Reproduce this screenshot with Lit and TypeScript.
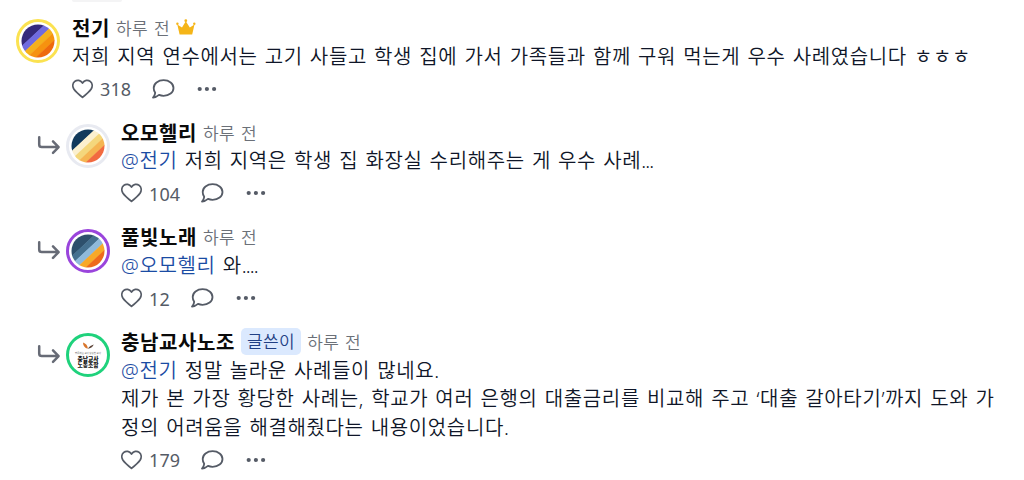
import {LitElement, html, css, svg} from 'lit';
import {customElement, property} from 'lit/decorators.js';

interface Comment {
    name: string;
    avatar: string;
    likes: number;
    mention?: string;
    lines: string[];
    trail?: string;
    crown?: boolean;
    author?: boolean;
    reply?: boolean;
}

const comments: Comment[] = [
    {
        name: '전기', avatar: 'sunset', likes: 318, crown: true,
        lines: ['저희 지역 연수에서는 고기 사들고 학생 집에 가서 가족들과 함께 구워 먹는게 우수 사례였습니다 ㅎㅎㅎ'],
    },
    {
        name: '오모헬리', avatar: 'sand', likes: 104, mention: '@전기', reply: true,
        lines: ['저희 지역은 학생 집 화장실 수리해주는 게 우수 사례'], trail: '...',
    },
    {
        name: '풀빛노래', avatar: 'ocean', likes: 12, mention: '@오모헬리', reply: true,
        lines: ['와'], trail: '....',
    },
    {
        name: '충남교사노조', avatar: 'union', likes: 179, mention: '@전기', reply: true, author: true,
        lines: [
            '정말 놀라운 사례들이 많네요.',
            '제가 본 가장 황당한 사례는, 학교가 여러 은행의 대출금리를 비교해 주고 ‘대출 갈아타기’까지 도와 가',
            '정의 어려움을 해결해줬다는 내용이었습니다.',
        ],
    },
];

// ring colour, then the diagonal bands from top left to bottom right
const palettes: Record<string, {ring: string; bands: string[]}> = {
    sunset: {ring: '#fbe251', bands: ['#35297c', '#706be0', '#f5b01c', '#f6920f', '#ee6a0c']},
    sand: {ring: '#e8eaf1', bands: ['#123a5c', '#fbf0cf', '#f4d77c', '#f5b552', '#f26a40']},
    ocean: {ring: '#9a45dc', bands: ['#2d506c', '#44708f', '#8fbadb', '#f7a928', '#ee6a1c']},
    union: {ring: '#1fd27c', bands: []},
};

@customElement('user-avatar')
export class UserAvatar extends LitElement {

    @property() kind = 'sunset';

    static styles = css`
      :host {
        display: block;
        width: 44px;
        height: 44px;
      }

      svg {
        display: block;
      }

      .motto {
        font: 2.4px "Noto Sans CJK KR", sans-serif;
        fill: #666;
      }

      .logo {
        font: 900 5.8px/1 "Noto Sans CJK KR", sans-serif;
        fill: #111;
      }
    `

    renderBands(bands: string[]) {
        const edges = [-24, -7.5, -1.5, 4.5, 10.5, 24];
        return svg`
            <clipPath id="disc"><circle cx="22" cy="22" r="16.5"/></clipPath>
            <g clip-path="url(#disc)">
                <g transform="translate(22 22) rotate(47)">
                    ${bands.map((fill, i) => svg`
                        <rect x=${edges[i]} y="-24" width=${edges[i + 1] - edges[i] + 0.4} height="48" fill=${fill}/>
                    `)}
                </g>
            </g>
        `;
    }

    renderUnion() {
        return svg`
            <path d="M17 9.500c2.800 1 5 3.200 4.800 6.300c-3-.8-4.900-3-4.800-6.300z" fill="#d9752b"/>
            <path d="M21.800 15.800c1.500-2.200 3.400-3.400 6-4.200c-1.200 2.600-3.200 4-6 4.200z" fill="#5c4438"/>
            <text class="motto" x="9" y="20.800" textLength="26" lengthAdjust="spacingAndGlyphs">행동하는 교사 당당한 교사</text>
            <text class="logo" x="11.500" y="28" textLength="21" lengthAdjust="spacingAndGlyphs">충남교사</text>
            <text class="logo" x="11.500" y="34.200" textLength="21" lengthAdjust="spacingAndGlyphs">노동조합</text>
        `;
    }

    render() {
        const {ring, bands} = palettes[this.kind];
        return html`
            <svg width="44" height="44" viewBox="0 0 44 44">
                <circle cx="22" cy="22" r="20.5" fill="#fff" stroke=${ring} stroke-width="3"/>
                ${bands.length ? this.renderBands(bands) : this.renderUnion()}
            </svg>
        `
    }
}

@customElement('comment-item')
export class CommentItem extends LitElement {

    @property({attribute: false}) comment!: Comment;

    static styles = css`
      :host {
        display: block;
      }

      .comment {
        display: flex;
        padding-left: 16px;
      }

      .comment.reply {
        padding-left: 37px;
      }

      .arrow {
        flex: none;
        width: 29px;
        padding-top: 17px;
      }

      svg {
        display: block;
        flex: none;
      }

      user-avatar {
        flex: none;
        margin: 6px 12px 0 0;
      }

      .reply user-avatar {
        margin-right: 11px;
      }

      .body {
        flex: 1;
        white-space: nowrap;
      }

      .head {
        display: flex;
        align-items: center;
        height: 28.6px;
      }

      .name {
        font-size: 20px;
        font-weight: 700;
        letter-spacing: 0.6px;
        color: #0a0a0a;
      }

      .badge {
        height: 27px;
        line-height: 27px;
        margin-left: 6px;
        padding: 0 6px;
        border-radius: 5px;
        background: #dbe9fe;
        color: #1f3f84;
        font-size: 17px;
        font-weight: 350;
        letter-spacing: 0.4px;
      }

      .time {
        margin-left: 6px;
        font-size: 17px;
        font-weight: 350;
        letter-spacing: 0.4px;
        word-spacing: 1px;
        color: #6b7078;
      }

      .crown {
        margin-left: 6px;
      }

      .line {
        height: 28.4px;
        line-height: 29.4px;
        font-size: 20px;
        font-weight: 350;
        letter-spacing: 0.63px;
        word-spacing: 1.3px;
        color: #0f1628;
      }

      .trail {
        letter-spacing: -0.9px;
      }

      .mention {
        color: #1a4ba3;
      }

      .actions {
        display: flex;
        align-items: center;
        height: 37.2px;
        color: #555b66;
      }

      .likes {
        margin: 1px 21px 0 6px;
        font-size: 18px;
        line-height: 24px;
        letter-spacing: 0.1px;
      }

      .dots {
        margin-left: 22px;
      }
    `

    render() {
        const c = this.comment;
        return html`
            <div class="comment ${c.reply ? 'reply' : ''}">
                ${c.reply ? html`
                    <div class="arrow">
                        <svg width="24" height="22" viewBox="0 0 24 22" fill="none" stroke="#676b76" stroke-width="2.500" stroke-linecap="round" stroke-linejoin="round">
                            <path d="M2.200 2.200v7.300q0 2.600 2.600 2.600h16.600M16 6.300l5.600 5.800-5.600 5.800"/>
                        </svg>
                    </div>
                ` : ''}
                <user-avatar kind=${c.avatar}></user-avatar>
                <div class="body">
                    <div class="head">
                        <span class="name">${c.name}</span>
                        ${c.author ? html`<span class="badge">글쓴이</span>` : ''}
                        <span class="time">하루 전</span>
                        ${c.crown ? html`
                            <svg class="crown" width="20" height="16" viewBox="0 0 20 16" fill="#f5b518">
                                <path d="M3.600 15.400L1.300 5.400l4.700 3.200L9.800 2.200l4 6.400 4.700-3.200-2.300 10z"/>
                                <circle cx="1.400" cy="4.700" r="1.200"/>
                                <circle cx="9.800" cy="1.700" r="1.400"/>
                                <circle cx="18.300" cy="4.700" r="1.200"/>
                            </svg>
                        ` : ''}
                    </div>
                    ${c.lines.map((line, i) => html`
                        <div class="line">${i === 0 && c.mention ? html`<span class="mention">${c.mention}</span> ` : ''}${line}${c.trail ? html`<span class="trail">${c.trail}</span>` : ''}</div>
                    `)}
                    <div class="actions">
                        <svg width="22" height="20" viewBox="0 0 22 20" fill="none" stroke="currentColor" stroke-width="1.800" stroke-linejoin="round">
                            <path d="M10.500 18.400C7 15.500 3.800 12.700 2 10.200C.2 7.500.6 4.200 2.800 2.400C5.200.5 8.400 1.100 10.500 4C12.600 1.100 15.800.5 18.200 2.400C20.400 4.200 20.800 7.500 19 10.200C17.200 12.700 14 15.500 10.500 18.400z"/>
                        </svg>
                        <span class="likes">${c.likes}</span>
                        <svg width="23" height="20" viewBox="0 0 23 20" fill="none" stroke="currentColor" stroke-width="1.800" stroke-linejoin="round">
                            <path d="M11.600 1.200c5.600 0 9.900 3.400 9.900 7.800s-4.300 7.800-9.900 7.800c-1.700 0-3.200-.3-4.600-.9c-1.500 1.300-3.500 2.500-6 2.700c1.200-1.300 2-3 2.200-4.800C2.200 12.400 1.700 10.700 1.700 9C1.700 4.600 6 1.200 11.600 1.200z"/>
                        </svg>
                        <svg class="dots" width="20" height="6" viewBox="0 0 20 6" fill="currentColor">
                            <circle cx="2.700" cy="3" r="2.100"/>
                            <circle cx="9.900" cy="3" r="2.100"/>
                            <circle cx="17.100" cy="3" r="2.100"/>
                        </svg>
                    </div>
                </div>
            </div>
        `
    }
}

@customElement('app-root')
export class AppRoot extends LitElement {

    static styles = css`
      :host {
        display: block;
        height: 480px;
        overflow: hidden;
        background: #fff;
        font-family: "Noto Sans", "Noto Sans CJK KR", sans-serif;
      }

      .previous {
        width: 50px;
        height: 2px;
        margin-left: 72px;
        border-radius: 0 0 6px 6px;
        background: #f4f4f5;
      }

      .thread {
        display: flex;
        flex-direction: column;
        gap: 10.6px;
        padding-top: 11px;
      }
    `

    render() {
        return html`
            <div class="previous"></div>
            <div class="thread">
                ${comments.map(c => html`<comment-item .comment=${c}></comment-item>`)}
            </div>
        `
    }
}
